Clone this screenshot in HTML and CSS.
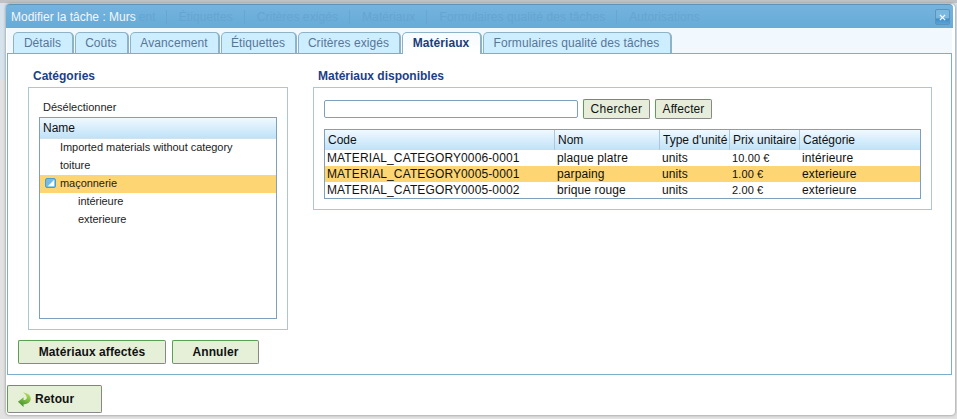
FILE: index.html
```html
<!DOCTYPE html>

<html>

<head>
    <title> Modifier la tâche </title>
    <link rel="stylesheet" href="styles.css">
</head>

<body>
    <div class="window">
        <div class="titlebar">
            <span class="title">Modifier la tâche : Murs</span>
            <div class="ghost">
                <span class="cut">ent</span><span>Étiquettes</span><span>Critères exigés</span><span>Matériaux</span><span>Formulaires qualité des tâches</span><span class="last">Autorisations</span>
            </div>
            <span class="close">
                <svg width="7" height="7" viewBox="0 0 8 8"><path d="M1 1 7 7M7 1 1 7" stroke="#fff" stroke-width="1.4" /></svg>
            </span>
        </div>

        <div class="tabs">
            <span class="tab t1">Détails</span>
            <span class="tab t2">Coûts</span>
            <span class="tab t3">Avancement</span>
            <span class="tab t4">Étiquettes</span>
            <span class="tab t5">Critères exigés</span>
            <span class="tab t6 active">Matériaux</span>
            <span class="tab t7">Formulaires qualité des tâches</span>
        </div>

        <div class="panel">
            <div class="columns">
                <div class="left">
                    <h5>Catégories</h5>
                    <div class="box treebox">
                        <div class="deselect">Désélectionner</div>
                        <div class="tree">
                            <div class="head">Name</div>
                            <div class="node">Imported materials without category</div>
                            <div class="node">toiture</div>
                            <div class="node selected">
                                <span class="check">
                                    <svg width="8" height="8" viewBox="0 0 10 10"><path d="M1 9 9 1V9Z" fill="#fff" /></svg>
                                </span>
                                maçonnerie
                            </div>
                            <div class="node child">intérieure</div>
                            <div class="node child">exterieure</div>
                        </div>
                    </div>
                    <div class="actions">
                        <button class="btn wide">Matériaux affectés</button>
                        <button class="btn cancel">Annuler</button>
                    </div>
                </div>

                <div class="right">
                    <h5>Matériaux disponibles</h5>
                    <div class="box gridbox">
                        <div class="search">
                            <input class="field" type="text">
                            <button class="small chercher">Chercher</button>
                            <button class="small affecter">Affecter</button>
                        </div>
                        <div class="grid">
                            <div class="row headrow">
                                <span>Code</span><span>Nom</span><span>Type d'unité</span><span>Prix unitaire</span><span>Catégorie</span>
                            </div>
                            <div class="row">
                                <span>MATERIAL_CATEGORY0006-0001</span><span>plaque platre</span><span>units</span><span class="price">10.00 €</span><span>intérieure</span>
                            </div>
                            <div class="row selected">
                                <span>MATERIAL_CATEGORY0005-0001</span><span>parpaing</span><span>units</span><span class="price">1.00 €</span><span>exterieure</span>
                            </div>
                            <div class="row">
                                <span>MATERIAL_CATEGORY0005-0002</span><span>brique rouge</span><span>units</span><span class="price">2.00 €</span><span>exterieure</span>
                            </div>
                        </div>
                    </div>
                </div>
            </div>
        </div>

        <button class="btn back">
            <svg width="15" height="17" viewBox="0 0 16 17">
                <defs>
                    <linearGradient id="arrow" x1="0.7" y1="0" x2="0.3" y2="1">
                        <stop offset="0" stop-color="#b5de5a" />
                        <stop offset="1" stop-color="#3c8f2c" />
                    </linearGradient>
                </defs>
                <path d="M6 1C12 1 15.500 5 14.500 9 13.500 12.500 10 13.500 7 13.500V16.500L1 11 7 6V9C9 9 10.500 8 10.500 6.500 10.500 4 8 2 6 1Z" fill="url(#arrow)" />
            </svg>
            Retour
        </button>
    </div>
</body>

</html>
```

FILE: styles.css
```css
html,
body {
    margin: 0;
    height: 100%;
    overflow: hidden;
}

body {
    background: linear-gradient(#bfc1c2 0, #bfc1c2 3px, #d6e3ec 3px, #d6e3ec 80px, #e2e2e2 80px);
    font: 12px "Liberation Sans", Arial, sans-serif;
    color: #111;
}

.window {
    width: 949px;
    height: 411px;
    margin: 4px 0 0 6px;
    box-sizing: border-box;
    background: #fff;
    border-radius: 4px 4px 4px 4px;
    box-shadow: 0 0 3px rgba(0, 0, 0, 0.45);
    padding-right: 3px;
}

.titlebar {
    height: 24px;
    background: linear-gradient(#74b3de, #67abd8);
    border-top: 1px solid #5c93b8;
    border-radius: 4px 4px 0 0;
    box-sizing: border-box;
    display: flex;
    align-items: center;
    padding: 0 3px 0 5px;
    margin-right: -1px;
}

.ghost {
    display: flex;
    flex: 1;
    color: #65a5d1;
    font-size: 12px;
    letter-spacing: 0.08px;
    white-space: nowrap;
    margin-left: 3px;
    overflow: hidden;
}

.ghost span {
    padding: 0 11px 0 12px;
    border-right: 1px solid #68a6d0;
}

.ghost .cut {
    padding: 0 10px 0 0;
}

.ghost .last {
    border-right: none;
}

.title {
    color: #f2f7fb;
    font-size: 12px;
}

.close {
    width: 15px;
    height: 16px;
    box-sizing: border-box;
    border: 1px solid #5f93b8;
    border-radius: 2px;
    background: linear-gradient(#7ab8e0 55%, #3f8fcb 65%, #5aa2d6);
    display: flex;
    align-items: center;
    justify-content: center;
    margin-top: 1px;
}

.tabs {
    height: 25px;
    background: #f1f9fe;
    display: flex;
    gap: 1px;
    align-items: flex-end;
    padding-left: 6px;
    margin-left: 1px;
}

.tab {
    height: 21px;
    box-sizing: border-box;
    border: 1px solid #8fb3c6;
    border-bottom: none;
    border-right-width: 2px;
    border-radius: 5px 5px 0 0;
    background: #cdeefe;
    color: #587698;
    font-size: 12px;
    letter-spacing: 0.08px;
    line-height: 20px;
    text-align: center;
    padding-right: 1px;
}

.t1 { width: 61px; }
.t2 { width: 54px; }
.t3 { width: 90px; }
.t4 { width: 76px; }
.t5 { width: 103px; }
.t6 { width: 80px; }
.t7 { width: 189px; }

.tab.active {
    height: 22px;
    background: linear-gradient(#f5fbff, #fff);
    color: #1c3d78;
    font-weight: bold;
    position: relative;
    margin-bottom: -1px;
}

.panel {
    height: 322px;
    box-sizing: border-box;
    border: 1px solid #7aaecb;
    margin-left: 1px;
    padding: 14px 18px 0 20px;
}

.columns {
    display: flex;
    gap: 25px;
}

h5 {
    margin: 0;
    height: 19px;
    font-size: 12px;
    line-height: 16px;
    font-weight: bold;
    color: #1b3f87;
    padding-left: 5px;
}

.box {
    box-sizing: border-box;
    border: 1px solid #aec6d0;
    background: #fff;
}

.left {
    width: 260px;
    flex-shrink: 0;
}

.treebox {
    height: 243px;
    padding: 12px 10px 10px;
}

.deselect {
    height: 17px;
    padding-left: 4px;
    font-size: 11px;
    line-height: 14px;
    color: #222;
}

.tree {
    height: 202px;
    box-sizing: border-box;
    border: 1px solid #7f9fbf;
}

.head {
    height: 21px;
    line-height: 20px;
    padding-left: 3px;
    font-size: 12px;
    background: linear-gradient(#f0f9ff, #bfe2f8);
    border-bottom: 1px solid #cfe2ee;
    box-sizing: border-box;
}

.node {
    height: 18px;
    line-height: 17px;
    font-size: 11px;
    letter-spacing: -0.05px;
    padding-left: 20px;
    position: relative;
    color: #1c1c1c;
}

.node.child {
    padding-left: 38px;
}

.selected {
    background: #fdd573;
}

.check {
    position: absolute;
    left: 5px;
    top: 3px;
    width: 9px;
    height: 8px;
    border: 1px solid #4c9ecf;
    border-radius: 2px;
    background: #6fbde8;
    display: flex;
    align-items: center;
    justify-content: center;
}

.actions {
    display: flex;
    gap: 6px;
    margin: 10px 0 0 -10px;
}

button {
    font-family: inherit;
    padding: 0;
    box-sizing: border-box;
    border: 1px solid #5a9f52;
    border-right-color: #888;
    border-bottom-color: #888;
    border-radius: 2px;
    background: #e6f0d9;
    color: #111;
}

.btn {
    font-size: 12px;
    font-weight: bold;
    height: 24px;
    letter-spacing: 0.1px;
}

.wide { width: 148px; }
.cancel { width: 87px; }

.right {
    width: 619px;
    flex-shrink: 0;
}

.gridbox {
    height: 123px;
    padding: 11px 10px 0;
}

.search {
    display: flex;
    align-items: center;
    height: 20px;
}

.field {
    width: 254px;
    height: 18px;
    box-sizing: border-box;
    border: 1px solid #7f9fbf;
    border-radius: 2px;
    background: #fff;
    padding: 0;
    margin: 0 5px 0 0;
}

.small {
    height: 20px;
    font-size: 12px;
    background: #e6eedb;
}

.chercher { width: 67px; margin-right: 5px; letter-spacing: 0.3px; }
.affecter { width: 57px; letter-spacing: 0.1px; }

.grid {
    margin-top: 10px;
    width: 597px;
    height: 70px;
    box-sizing: border-box;
    border: 1px solid #7f9fbf;
}

.row {
    display: grid;
    grid-template-columns: 230px 105px 70px 70px 1fr;
    height: 16px;
    line-height: 17px;
    font-size: 12px;
    letter-spacing: 0.12px;
}

.row span {
    padding-left: 2px;
    white-space: nowrap;
    overflow: hidden;
}

.row .price {
    font-size: 11px;
}

.headrow {
    height: 20px;
    line-height: 20px;
    letter-spacing: 0;
    background: linear-gradient(#f0f9ff, #bfe2f8);
}

.headrow span {
    padding-left: 3px;
    border-right: 1px solid #a9c8dc;
}

.headrow span:last-child {
    border-right: none;
}

.back {
    width: 95px;
    height: 28px;
    margin: 10px 0 0 1px;
    display: flex;
    align-items: center;
    gap: 3px;
    padding-left: 9px;
}
```
